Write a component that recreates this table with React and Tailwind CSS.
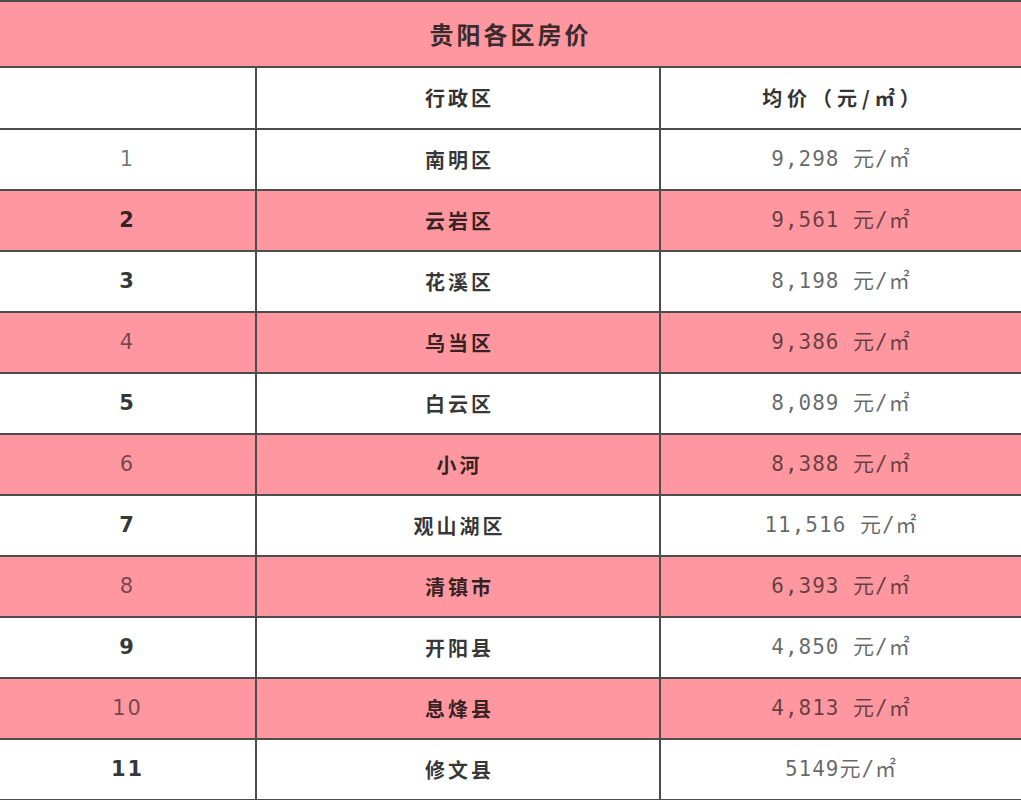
import React from 'react';

const rows = [
  { no: '1', name: '南明区', price: '9,298 元/㎡', boldNo: false },
  { no: '2', name: '云岩区', price: '9,561 元/㎡', boldNo: true },
  { no: '3', name: '花溪区', price: '8,198 元/㎡', boldNo: true },
  { no: '4', name: '乌当区', price: '9,386 元/㎡', boldNo: false },
  { no: '5', name: '白云区', price: '8,089 元/㎡', boldNo: true },
  { no: '6', name: '小河', price: '8,388 元/㎡', boldNo: false },
  { no: '7', name: '观山湖区', price: '11,516 元/㎡', boldNo: true },
  { no: '8', name: '清镇市', price: '6,393 元/㎡', boldNo: false },
  { no: '9', name: '开阳县', price: '4,850 元/㎡', boldNo: true },
  { no: '10', name: '息烽县', price: '4,813 元/㎡', boldNo: false },
  { no: '11', name: '修文县', price: '5149元/㎡', boldNo: true },
];

const cjk = "font-['Noto_Sans_CJK_SC',sans-serif]";
const num = "font-['DejaVu_Sans','Noto_Sans_CJK_SC',sans-serif]";
const mono = "font-['DejaVu_Sans_Mono','Noto_Sans_CJK_SC',monospace]";

export default function App() {
  return (
    <div className="w-[1021px] h-[800px] overflow-hidden bg-white">
      <div className="border-t-2 border-[#4d4d4d]">
        <div className={`h-[66px] border-b-2 border-[#4d4d4d] bg-[#fe979f] flex items-center justify-center text-[24px] font-bold tracking-[3px] text-[#3b2b2d] ${cjk}`}>
          贵阳各区房价
        </div>

        <div className="grid grid-cols-[255px_404px_1fr] h-[62px] border-b-2 border-[#4d4d4d] bg-white">
          <div />
          <div className={`border-l-2 border-[#4d4d4d] flex items-center justify-center pl-[3px] text-[20px] font-bold tracking-[3px] text-[#333] ${cjk}`}>
            行政区
          </div>
          <div className={`border-l-2 border-[#4d4d4d] flex items-center justify-center pl-[5px] text-[20px] font-bold tracking-[5px] text-[#333] ${cjk}`}>
            均价（元/㎡）
          </div>
        </div>

        {rows.map((r, i) => {
          const pink = i % 2 === 1;
          return (
            <div
              key={r.no}
              className={`grid grid-cols-[255px_404px_1fr] h-[61px] border-b-2 border-[#4d4d4d] ${pink ? 'bg-[#fe979f]' : 'bg-white'}`}
            >
              <div
                className={`flex items-center justify-center text-[21px] tracking-[2px] ${num} ${
                  r.boldNo ? 'font-bold text-black/80' : 'font-normal text-black/55'
                }`}
              >
                {r.no}
              </div>
              <div className={`border-l-2 border-[#4d4d4d] flex items-center justify-center pl-[3px] text-[20px] font-bold tracking-[3px] text-black/80 ${cjk}`}>
                {r.name}
              </div>
              <div className={`border-l-2 border-[#4d4d4d] flex items-center justify-center text-[21px] tracking-[1px] text-black/60 ${mono}`}>
                {r.price}
              </div>
            </div>
          );
        })}
      </div>
    </div>
  );
}
